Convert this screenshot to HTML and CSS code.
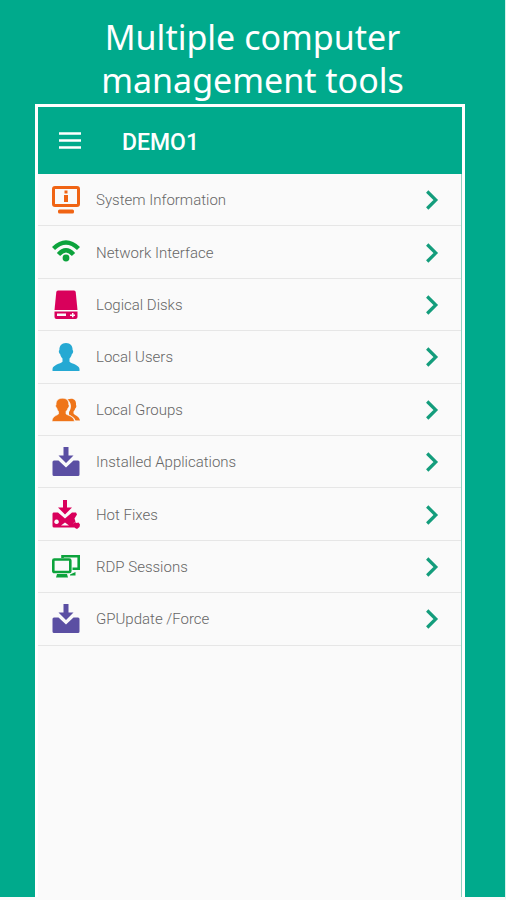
FILE: index.html
```html
<!DOCTYPE html>
<html lang="en">
<head>
<meta charset="utf-8">
<meta name="viewport" content="width=device-width, initial-scale=1">
<title>Multiple computer management tools</title>
<link rel="stylesheet" href="styles.css">
</head>
<body>
<svg class="defs" aria-hidden="true">
  <symbol id="chevron" viewBox="0 0 14 20"><path d="M2.200 1.500l8.600 8.500-8.600 8.500" fill="none" stroke="currentColor" stroke-width="3.200"/></symbol>
  <symbol id="install" viewBox="0 0 28 30"><path d="M11.500 0h5v8.500h5L14 16 6.500 8.500h5z"/><path d="M2 13.500h4.500L14 20.500l7.500-7H26q1.500 0 1.500 1.500v12.500q0 1.500-1.500 1.500H2q-1.500 0-1.500-1.500V15q0-1.500 1.500-1.500z"/></symbol>
</svg>
<main class="promo">
  <h1 class="headline">Multiple computer<br>management tools</h1>
  <section class="phone">
    <header class="bar">
      <button class="menu" type="button" aria-label="Menu">
        <svg viewBox="0 0 24 17" width="24" height="17"><path d="M1 1.500h22M1 8.500h22M1 15.500h22" stroke="currentColor" stroke-width="2.400"/></svg>
      </button>
      <h2 class="name">DEMO1</h2>
    </header>
    <nav class="list">
      <a class="row" href="#system">
        <svg class="icon orange" viewBox="0 0 28 30"><rect x="1.500" y="2.500" width="25" height="18" rx="1.500" fill="none" stroke="currentColor" stroke-width="3"/><path d="M12.500 5.500h3v3h-3zM12 10h4v7h-4z"/><rect x="6" y="24.500" width="16" height="4" rx="1.500"/></svg>
        <span class="label">System Information</span><svg class="chevron"><use href="#chevron"/></svg>
      </a>
      <a class="row" href="#network">
        <svg class="icon green" viewBox="0 0 28 30"><path d="M1.500 10.500Q14-1.500 26.500 10.500M6.500 16.500Q14 8 21.500 16.500" fill="none" stroke="currentColor" stroke-width="4.400"/><circle cx="14" cy="20" r="3.400"/></svg>
        <span class="label">Network Interface</span><svg class="chevron"><use href="#chevron"/></svg>
      </a>
      <a class="row" href="#disks">
        <svg class="icon pink" viewBox="0 0 28 30"><path d="M6 .500h16q1.500 0 1.700 1.500L25.500 20h-23L4.300 2Q4.500.500 6 .500z"/><path fill-rule="evenodd" d="M2.500 21.500h23V27q0 2-2 2h-19q-2 0-2-2zM5 23.500V26h9v-2.500zM20 23v1.500h-2V26h2v1.200h1.500V26H23v-1.500h-1.500V23z"/></svg>
        <span class="label">Logical Disks</span><svg class="chevron"><use href="#chevron"/></svg>
      </a>
      <a class="row" href="#users">
        <svg class="icon blue" viewBox="0 0 28 30"><path d="M14 1c4.500 0 6.700 3 6.600 7 1 .5.700 3.500-.8 4.200-.5 2-1.300 3.300-2.300 4.300v3.200c2 2 9.800 3 10 7.300v2H.5v-2c.2-4.300 8-5.300 10-7.300v-3.200c-1-1-1.800-2.300-2.300-4.300C6.700 11.500 6.400 8.500 7.400 8 7.300 4 9.500 1 14 1z"/></svg>
        <span class="label">Local Users</span><svg class="chevron"><use href="#chevron"/></svg>
      </a>
      <a class="row" href="#groups">
        <svg class="icon amber" viewBox="0 0 28 30"><path d="M15.500 4.500c6-2 9 .7 8.500 5.500.8.800.3 3-.8 3.500-.4 1.500-1 2.300-1.700 3v2c1.500 2 6 3 6.500 7h-4.500c-1-3-3.500-4.500-6.500-6v-2.500c3-4 2.500-9.500-1.500-12.500z"/><path d="M10.500 3.300c4.500 0 6.400 2.500 6.200 6.200.8.500.5 3-.7 3.500-.4 1.700-1.200 2.700-2 3.500v2.500c1.800 1.500 8 2 8.500 7.500H0c.2-5.500 5-6 6.500-7.500v-2.500C5.700 15.700 5.200 14.700 4.800 13c-1.200-.5-1.500-3-.7-3.500-.2-3.700 1.900-6.200 6.400-6.200z" stroke="#fafafa" stroke-width=".6"/></svg>
        <span class="label">Local Groups</span><svg class="chevron"><use href="#chevron"/></svg>
      </a>
      <a class="row" href="#applications">
        <svg class="icon violet"><use href="#install"/></svg>
        <span class="label">Installed Applications</span><svg class="chevron"><use href="#chevron"/></svg>
      </a>
      <a class="row" href="#fixes">
        <svg class="icon pink" viewBox="0 0 28 30"><path d="M11 0h4v7.500h5l-7 7-7-7h5z"/><path fill-rule="evenodd" d="M1.500 12.500H6l7 6 7-6h4l1 2-2.500 4 1 3-2.500 2 1.500 4H2q-1.500 0-1.500-1.500V14q0-1.500 1-1.500zM4.500 19.500a2.300 2.300 0 1 0 .1 0zM13 22.500l-4 3h8z"/><path d="M21 23.500l2-1.500 1.500 1 2-.5 1.500 2-.5 2.500-2.500 2-2-1-2-2z"/></svg>
        <span class="label">Hot Fixes</span><svg class="chevron"><use href="#chevron"/></svg>
      </a>
      <a class="row" href="#rdp">
        <svg class="icon green" viewBox="0 0 28 30"><g fill="none" stroke="currentColor" stroke-width="2.600"><rect x="1.300" y="7.500" width="17" height="12.500" rx="1"/><path d="M10.500 6V4.200h16.200v12.600H20.500"/></g><path d="M5 22h10l1 3.500H4zM18 22.500l5.500-2.500v3.500H18z"/></svg>
        <span class="label">RDP Sessions</span><svg class="chevron"><use href="#chevron"/></svg>
      </a>
      <a class="row" href="#gpupdate">
        <svg class="icon violet"><use href="#install"/></svg>
        <span class="label">GPUpdate /Force</span><svg class="chevron"><use href="#chevron"/></svg>
      </a>
    </nav>
  </section>
</main>
</body>
</html>
```
FILE: styles.css
```css
* {
  box-sizing: border-box;
}

body {
  margin: 0;
  background: #fafafa;
  font-family: Roboto, sans-serif;
}

.defs {
  position: absolute;
  width: 0;
  height: 0;
}

.promo {
  display: flex;
  flex-direction: column;
  min-height: 100vh;
  padding-top: 16px;
  background: #00aa8c;
  border-right: 1px solid #d5f0ea;
  border-bottom: 3px solid #fafafa;
}

.headline {
  margin: 0 0 2px;
  color: #fff;
  font-family: "Noto Sans", sans-serif;
  font-size: 34px;
  font-weight: 400;
  line-height: 43px;
  text-align: center;
  white-space: nowrap;
}

.phone {
  display: flex;
  flex: 1;
  flex-direction: column;
  margin: 0 40px 0 35px;
  border: 3px solid #fff;
  border-bottom: 0;
  background: #fafafa;
}

.bar {
  display: flex;
  align-items: center;
  gap: 40px;
  height: 67px;
  padding: 0 20px;
  background: #00aa8c;
  color: #fff;
}

.menu {
  display: flex;
  padding: 0;
  border: 0;
  background: none;
  color: inherit;
}

.name {
  margin: 0;
  padding-top: 3px;
  font-size: 23px;
  font-weight: 500;
}

.list {
  display: grid;
  flex: 1;
  grid-template-rows: repeat(9, minmax(52px, 7.25%));
  border-right: 1px solid #8fd0c0;
}

.row {
  display: flex;
  align-items: center;
  padding: 1px 22px 0 14px;
  border-bottom: 1px solid #e6e6e6;
  color: #666;
  font-size: 15px;
  font-weight: 300;
  text-decoration: none;
}

.icon {
  width: 28px;
  height: 30px;
  margin-right: 16px;
  fill: currentColor;
}

.label {
  flex: 1;
}

.chevron {
  width: 14px;
  height: 20px;
  color: #149d7c;
}

.orange { color: #f06414; }
.amber { color: #ef7519; }
.green { color: #0ca33c; }
.pink { color: #d9005b; }
.blue { color: #25a9d3; }
.violet { color: #5b4fa3; }
```
